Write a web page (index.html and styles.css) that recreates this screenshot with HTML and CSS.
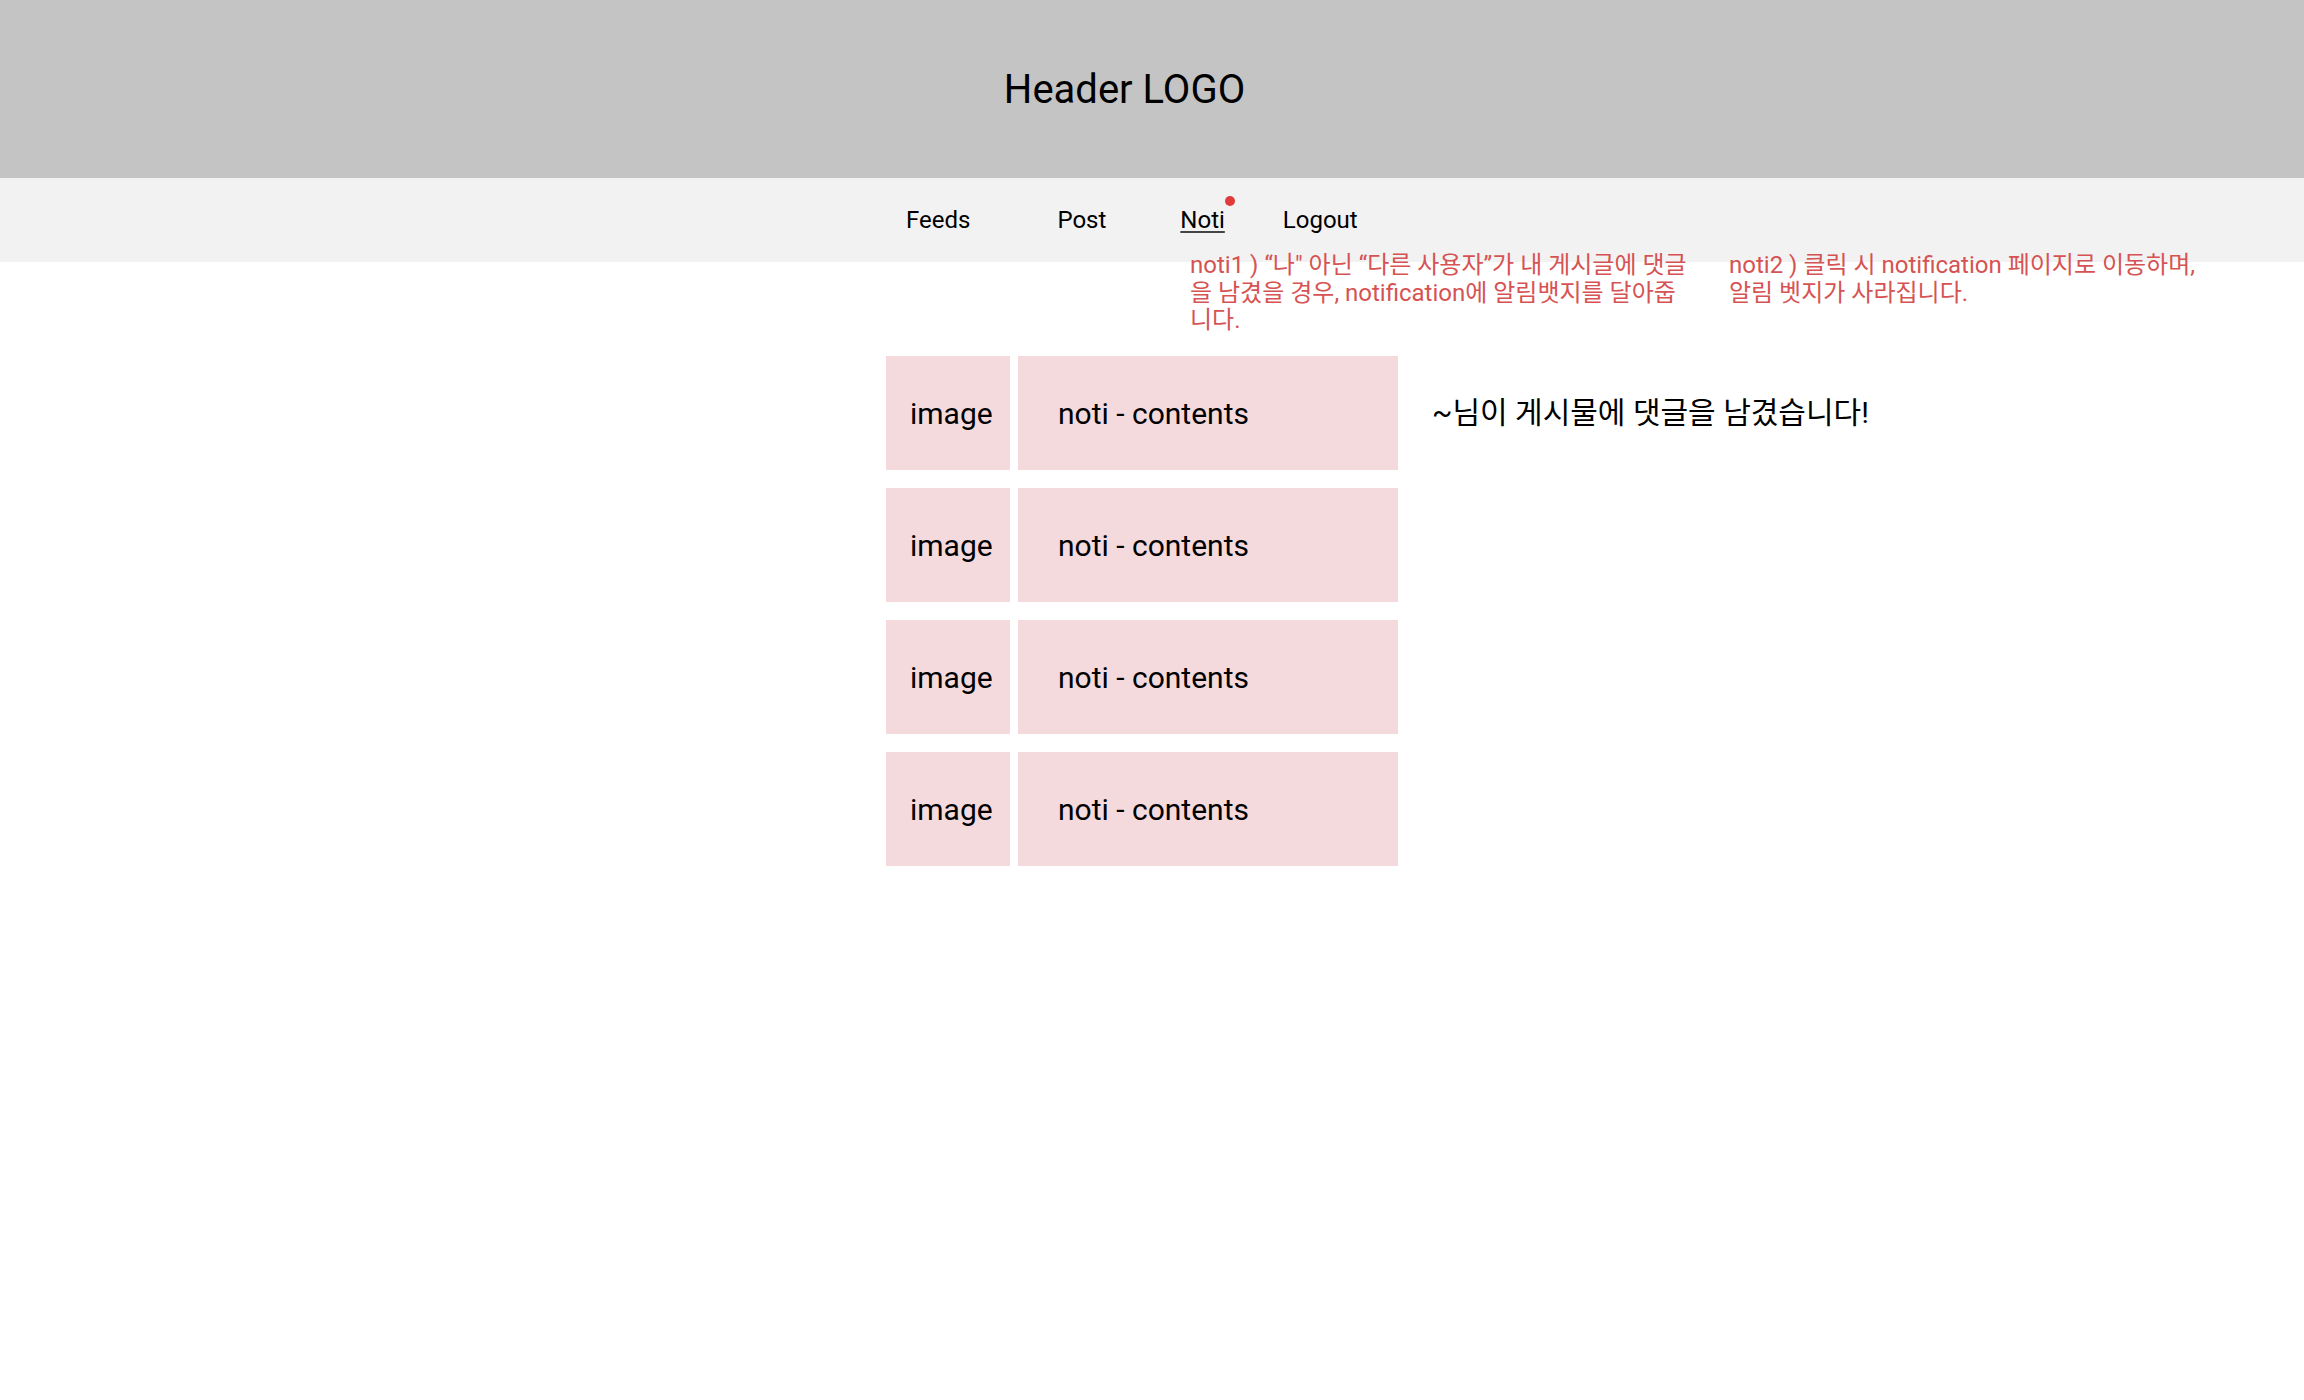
FILE: index.html
```html
<!DOCTYPE html>
<html lang="ko">
<head>
    <meta charset="UTF-8">
    <meta name="viewport" content="width=device-width, initial-scale=1.0">
    <title>Notification</title>
    <link rel="stylesheet" href="styles.css">
</head>
<body>
    <div class="page">
        <header class="header">
            <div class="logo">Header LOGO</div>
        </header>

        <nav class="nav">
            <a class="nav-item feeds">Feeds</a>
            <a class="nav-item post">Post</a>
            <a class="nav-item noti">Noti<span class="badge"></span></a>
            <a class="nav-item logout">Logout</a>
        </nav>

        <!-- Annotations -->
        <div class="note note-1">noti1 ) “나" 아닌 “다른 사용자”가 내 게시글에 댓글<br>을 남겼을 경우, notification에 알림뱃지를 달아줍<br>니다.</div>
        <div class="note note-2">noti2 ) 클릭 시 notification 페이지로 이동하며,<br>알림 벳지가 사라집니다.</div>

        <main class="noti-list">
            <div class="noti-row">
                <div class="noti-image">image</div>
                <div class="noti-content">noti - contents</div>
                <div class="noti-message">~님이 게시물에 댓글을 남겼습니다!</div>
            </div>
            <div class="noti-row">
                <div class="noti-image">image</div>
                <div class="noti-content">noti - contents</div>
            </div>
            <div class="noti-row">
                <div class="noti-image">image</div>
                <div class="noti-content">noti - contents</div>
            </div>
            <div class="noti-row">
                <div class="noti-image">image</div>
                <div class="noti-content">noti - contents</div>
            </div>
        </main>
    </div>
</body>
</html>
```

FILE: styles.css
```css
body {
    margin: 0;
    background-color: #ffffff;
    font-family: Roboto, "Noto Sans CJK KR", sans-serif;
    color: #000000;
}

.page {
    position: relative;
    min-height: 1400px;
}

.header {
    height: 178px;
    background-color: #c4c4c4;
    display: flex;
    justify-content: center;
    align-items: center;
    padding-right: 55px;
}

.logo {
    font-size: 40px;
}

.nav {
    height: 84px;
    background-color: #f2f2f2;
    display: flex;
    align-items: center;
    padding-left: 906px;
}

.nav-item {
    font-size: 24px;
    color: #000000;
    cursor: pointer;
}

.post {
    margin-left: 87px;
}

.noti {
    position: relative;
    margin-left: 74px;
    text-decoration: underline;
    text-decoration-color: #444444;
    text-underline-offset: 3px;
}

.logout {
    margin-left: 58px;
}

/* red notification badge */
.badge {
    position: absolute;
    top: -10px;
    right: -10px;
    width: 10px;
    height: 10px;
    border-radius: 50%;
    background-color: #e03a3a;
}

.note {
    position: absolute;
    top: 252px;
    font-size: 24px;
    line-height: 27.5px;
    color: #d65353;
    white-space: nowrap;
}

.note-1 {
    left: 1190px;
}

.note-2 {
    left: 1729px;
}

.noti-list {
    display: flex;
    flex-direction: column;
    gap: 18px;
    padding: 94px 0 0 886px;
}

.noti-row {
    display: flex;
    align-items: center;
    gap: 8px;
    height: 114px;
}

.noti-image,
.noti-content {
    height: 100%;
    display: flex;
    align-items: center;
    background-color: #f5dadd;
    font-size: 30px;
    box-sizing: border-box;
}

.noti-image {
    width: 124px;
    padding-left: 24px;
}

.noti-content {
    width: 380px;
    padding-left: 40px;
}

.noti-message {
    margin-left: 26px;
    margin-bottom: 6px;
    font-size: 30px;
}
```
